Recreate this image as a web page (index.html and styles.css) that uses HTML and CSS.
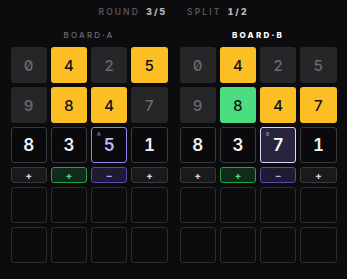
FILE: index.html
```html
<!DOCTYPE html>
<html lang="en">
<head>
    <meta charset="UTF-8">
    <title>Split</title>
    <link rel="stylesheet" href="styles.css">
</head>
<body>
    <div class="game">
        <div class="status">
            <span class="stat">ROUND <b>3/5</b></span>
            <span class="stat">SPLIT <b>1/2</b></span>
        </div>

        <div class="boards">
            <!-- Board A -->
            <div class="board">
                <div class="label">BOARD·A</div>
                <div class="grid">
                    <span class="tile off">0</span>
                    <span class="tile hit">4</span>
                    <span class="tile off">2</span>
                    <span class="tile hit">5</span>
                    <span class="tile off">9</span>
                    <span class="tile hit">8</span>
                    <span class="tile hit">4</span>
                    <span class="tile off">7</span>

                    <span class="slot">8</span>
                    <span class="slot">3</span>
                    <span class="slot picked"><i>A</i>5</span>
                    <span class="slot">1</span>

                    <span class="op">+</span>
                    <span class="op plus">+</span>
                    <span class="op minus">−</span>
                    <span class="op">+</span>

                    <span class="empty"></span>
                    <span class="empty"></span>
                    <span class="empty"></span>
                    <span class="empty"></span>
                    <span class="empty"></span>
                    <span class="empty"></span>
                    <span class="empty"></span>
                    <span class="empty"></span>
                </div>
            </div>

            <!-- Board B -->
            <div class="board active">
                <div class="label">BOARD·B</div>
                <div class="grid">
                    <span class="tile off">0</span>
                    <span class="tile hit">4</span>
                    <span class="tile off">2</span>
                    <span class="tile off">5</span>
                    <span class="tile off">9</span>
                    <span class="tile good">8</span>
                    <span class="tile hit">4</span>
                    <span class="tile hit">7</span>

                    <span class="slot">8</span>
                    <span class="slot">3</span>
                    <span class="slot picked current"><i>B</i>7</span>
                    <span class="slot">1</span>

                    <span class="op">+</span>
                    <span class="op plus">+</span>
                    <span class="op minus">−</span>
                    <span class="op">+</span>

                    <span class="empty"></span>
                    <span class="empty"></span>
                    <span class="empty"></span>
                    <span class="empty"></span>
                    <span class="empty"></span>
                    <span class="empty"></span>
                    <span class="empty"></span>
                    <span class="empty"></span>
                </div>
            </div>
        </div>
    </div>
</body>
</html>
```

FILE: styles.css
```css
body {
    margin: 0;
    background: #0c0c0e;
    color: #e8e8ea;
    font-family: Inter, "DejaVu Sans", sans-serif;
    font-feature-settings: "zero" 1, "tnum" 1;
}

.game {
    width: 326px;
    margin: 0 auto;
    padding-top: 7px;
}

/* En-tête */
.status {
    display: flex;
    justify-content: center;
    gap: 20px;
    font-size: 8.5px;
    line-height: 11px;
    letter-spacing: 2.1px;
    font-weight: 600;
    color: #55555b;
}

.status b {
    color: #b4b4b8;
    margin-left: 2px;
}

/* Plateaux */
.boards {
    display: flex;
    gap: 12px;
    margin-top: 12px;
}

.board {
    flex: 1;
}

.label {
    text-align: center;
    font-size: 8px;
    line-height: 10px;
    letter-spacing: 2.2px;
    font-weight: 500;
    color: #6c6c72;
    margin-bottom: 7px;
}

.board.active .label {
    color: #ffffff;
    font-weight: 800;
}

.grid {
    display: grid;
    grid-template-columns: repeat(4, 1fr);
    grid-template-rows: 36px 36px 36px 16px 36px 36px;
    gap: 4px;
}

.tile, .slot, .op, .empty {
    display: flex;
    align-items: center;
    justify-content: center;
    border-radius: 3px;
    box-sizing: border-box;
}

.tile {
    font-size: 15px;
    font-weight: 500;
}

.tile.off { background: #262628; color: #6a6a70; }
.tile.hit { background: #fbbf24; color: #111; }
.tile.good { background: #4ade80; color: #111; }

.slot {
    position: relative;
    border: 1.5px solid #3a3a3e;
    background: #0a0a0c;
    font-size: 17px;
    font-weight: 600;
    color: #f2f2f4;
}

.slot.picked {
    border-color: #9b7ff0;
    color: #c8b8ff;
}

.slot.picked.current {
    border-color: #dcd4f4;
    background: #29243e;
    color: #ffffff;
}

.slot i {
    position: absolute;
    top: 3px;
    left: 5px;
    font-style: normal;
    font-weight: 600;
    font-size: 5px;
    color: #8a7ac8;
}

.slot.current i { color: #8c8a98; }

.op {
    border: 1px solid #38383c;
    background: #1a1a1c;
    font-size: 10px;
    font-weight: 700;
    color: #d8d8dc;
}

.op.plus {
    border-color: #22a04b;
    background: #112a1a;
    color: #4ade80;
}

.op.minus {
    border-color: #5b48a8;
    background: #1f1a34;
    color: #b8a8f0;
}

.empty {
    border: 1.5px solid #2c2c2f;
}
```
